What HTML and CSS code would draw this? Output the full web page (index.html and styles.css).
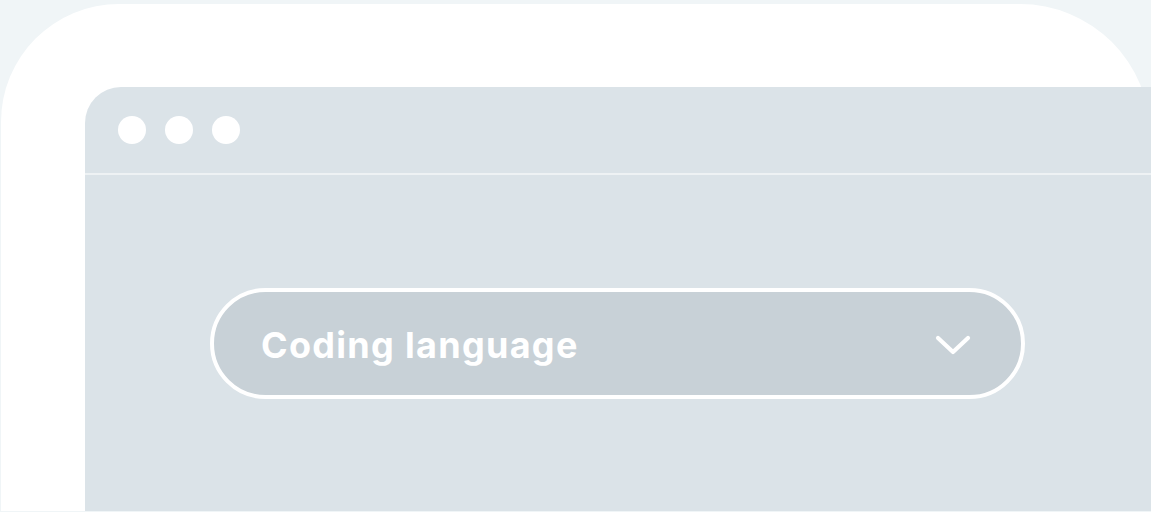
FILE: index.html
```html
<!DOCTYPE html>
<html>
<head>
<meta charset="utf-8">
<link rel="stylesheet" href="styles.css">
</head>
<body>
<div class="frame">
  <div class="window">
    <div class="titlebar">
      <span class="dot"></span><span class="dot"></span><span class="dot"></span>
    </div>
    <div class="content">
      <div class="select">
        <span class="label">Coding language</span>
        <svg class="chev" width="36" height="22" viewBox="0 0 36 22"><path d="M3 4 L18 18 L33 4" fill="none" stroke="#fff" stroke-width="4.2" stroke-linecap="round" stroke-linejoin="round"/></svg>
      </div>
    </div>
  </div>
</div>
</body>
</html>
```
FILE: styles.css
```css
html, body { margin: 0; padding: 0; }
body {
  background: #f0f5f7;
  width: 1151px;
  height: 512px;
  overflow: hidden;
  font-family: Inter, "Open Sans", sans-serif;
}
.frame {
  margin: 4px 1px 0 1px;
  height: 507px;
  background: #ffffff;
  border-radius: 118px 130px 0 0;
  padding: 83px 0 0 84px;
  box-sizing: border-box;
}
.window {
  background: #dbe3e8;
  border-top-left-radius: 36px;
  height: 100%;
  margin-right: -1px;
  display: flex;
  flex-direction: column;
}
.titlebar {
  height: 86px;
  border-bottom: 2px solid #eef2f4;
  display: flex;
  align-items: center;
  gap: 19px;
  padding-left: 33px;
}
.dot {
  width: 28px;
  height: 28px;
  border-radius: 50%;
  background: #ffffff;
}
.content {
  padding: 113px 0 0 125px;
}
.select {
  width: 815px;
  height: 111px;
  box-sizing: border-box;
  border: 4px solid #ffffff;
  border-radius: 56px;
  background: #c8d1d7;
  display: flex;
  align-items: center;
  justify-content: space-between;
  padding: 2px 50px 0 47px;
}
.label {
  color: #ffffff;
  font-weight: 700;
  font-size: 36px;
  letter-spacing: 1.3px;
}
.chev { display: block; }
```
